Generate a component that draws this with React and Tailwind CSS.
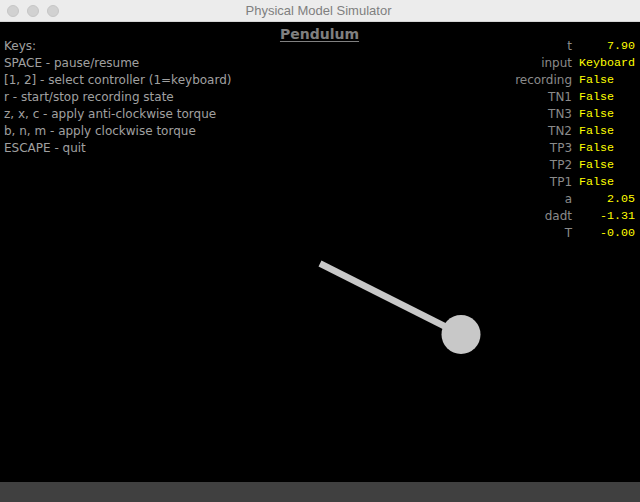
const keys = [
  'Keys:',
  'SPACE - pause/resume',
  '[1, 2] - select controller (1=keyboard)',
  'r - start/stop recording state',
  'z, x, c - apply anti-clockwise torque',
  'b, n, m - apply clockwise torque',
  'ESCAPE - quit',
];

const stats = [
  ['t', '    7.90'],
  ['input', 'Keyboard'],
  ['recording', 'False'],
  ['TN1', 'False'],
  ['TN3', 'False'],
  ['TN2', 'False'],
  ['TP3', 'False'],
  ['TP2', 'False'],
  ['TP1', 'False'],
  ['a', '    2.05'],
  ['dadt', '   -1.31'],
  ['T', '   -0.00'],
];

const Pendulum = () => (
  <svg className="absolute inset-0" width="640" height="460" viewBox="0 0 640 460">
    <line x1="320" y1="241.5" x2="461" y2="312.5" stroke="#c8c8c8" strokeWidth="6.5" />
    <circle cx="461" cy="312.5" r="19.5" fill="#c8c8c8" />
  </svg>
);

export default function App() {
  return (
    <div className="w-[640px] h-[502px] flex flex-col bg-black overflow-hidden">
      <div className="h-[22px] shrink-0 flex items-center relative bg-[#ececec] border-b border-[#d4d4d4]">
        <div className="flex gap-[8px] pl-[7px]">
          <span className="w-[12px] h-[12px] rounded-full bg-[#d1d1d1] border border-[#c6c6c6]" />
          <span className="w-[12px] h-[12px] rounded-full bg-[#d1d1d1] border border-[#c6c6c6]" />
          <span className="w-[12px] h-[12px] rounded-full bg-[#d1d1d1] border border-[#c6c6c6]" />
        </div>
        <div className="flex-1 text-center pr-[62px] text-[13px] text-[#7f7f7f] font-['Liberation_Sans',sans-serif]">
          Physical Model Simulator
        </div>
      </div>

      <div className="relative flex-1 bg-black">
        <Pendulum />
        <div className="relative flex font-['DejaVu_Sans',sans-serif] text-[12px] leading-[17px]">
          <div className="flex-1 pl-[4px] pt-[16px] text-[#a0a0a0]">
            {keys.map((k) => (
              <div key={k} className="whitespace-pre">{k}</div>
            ))}
          </div>
          <div className="pt-[4px]">
            <div className="font-bold text-[14px] leading-[17px] text-[#808080] underline underline-offset-[2px]">
              Pendulum
            </div>
          </div>
          <div className="flex-1 flex justify-end pr-[5px] pt-[16px]">
            <div className="grid grid-cols-[auto_56px] gap-x-[7px]">
              {stats.map(([label, value]) => (
                <div key={label} className="contents">
                  <div className="text-right text-[#8a8a8a]">{label}</div>
                  <div className="whitespace-pre text-[#ffff00] font-['Liberation_Mono',monospace] text-[11.67px]">
                    {value}
                  </div>
                </div>
              ))}
            </div>
          </div>
        </div>
      </div>

      <div className="h-[20px] shrink-0 bg-[#404040]" />
    </div>
  );
}
